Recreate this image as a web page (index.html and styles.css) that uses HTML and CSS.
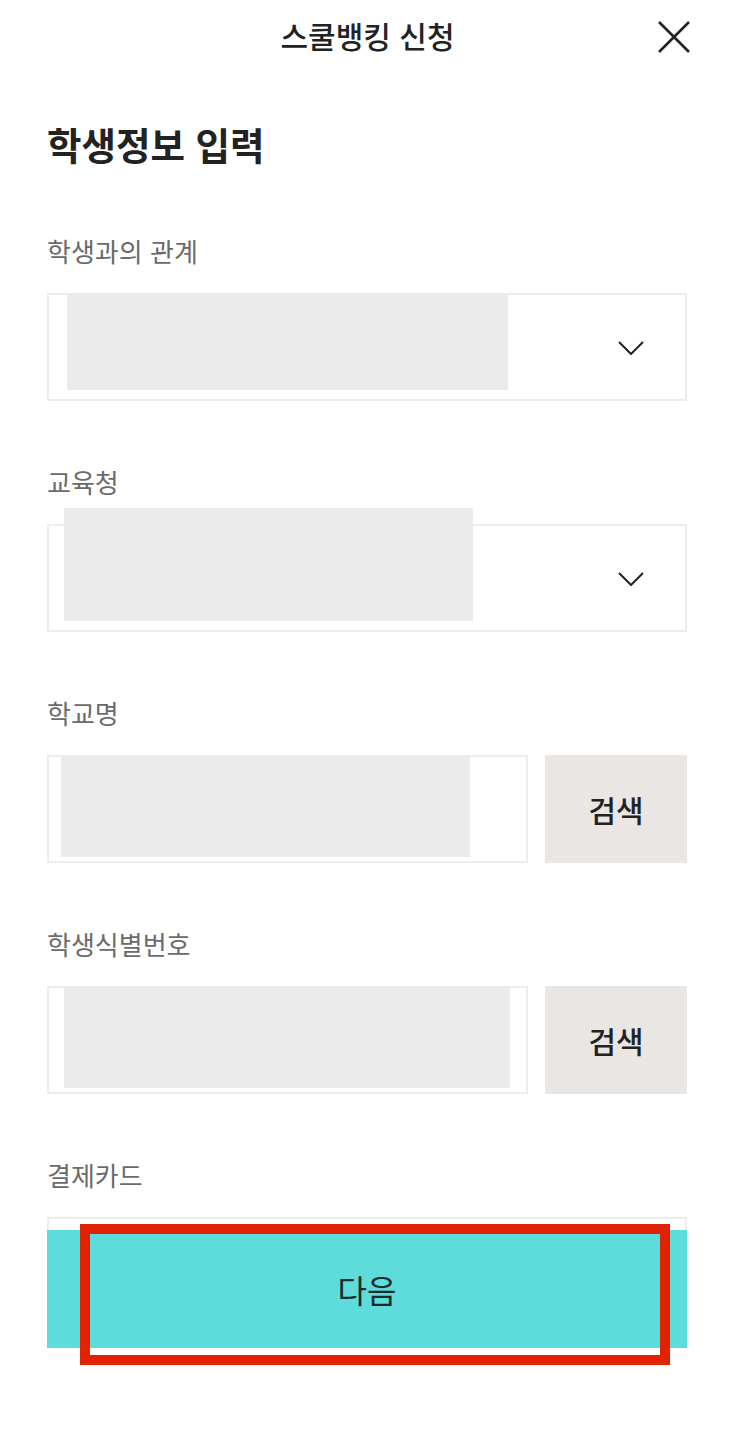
FILE: index.html
```html
<!DOCTYPE html>
<html lang="ko">
<head>
<meta charset="utf-8">
<link rel="stylesheet" href="styles.css">
</head>
<body>
<div class="page">
  <header class="header">
    <h1 class="title">스쿨뱅킹 신청</h1>
    <button class="close" aria-label="닫기">
      <svg width="34" height="34" viewBox="0 0 34 34"><path d="M2 2 L32 32 M32 2 L2 32" stroke="#222" stroke-width="2.6" fill="none"/></svg>
    </button>
  </header>

  <main class="content">
    <h2 class="heading">학생정보 입력</h2>

    <section class="field">
      <label class="label">학생과의 관계</label>
      <div class="box select">
        <div class="mask mask1"></div>
        <svg class="chev" width="26" height="14" viewBox="0 0 26 14"><path d="M1 1 L13 13 L25 1" stroke="#222" stroke-width="2" fill="none"/></svg>
      </div>
    </section>

    <section class="field">
      <label class="label">교육청</label>
      <div class="box select">
        <div class="mask mask2"></div>
        <svg class="chev" width="26" height="14" viewBox="0 0 26 14"><path d="M1 1 L13 13 L25 1" stroke="#222" stroke-width="2" fill="none"/></svg>
      </div>
    </section>

    <section class="field">
      <label class="label">학교명</label>
      <div class="row">
        <div class="box input"><div class="mask mask3"></div></div>
        <button class="search">검색</button>
      </div>
    </section>

    <section class="field">
      <label class="label">학생식별번호</label>
      <div class="row">
        <div class="box input"><div class="mask mask4"></div></div>
        <button class="search">검색</button>
      </div>
    </section>

    <section class="field">
      <label class="label">결제카드</label>
      <div class="box select"></div>
    </section>
  </main>

  <div class="bottom">
    <button class="next">다음</button>
  </div>
  <div class="highlight"></div>
</div>
</body>
</html>
```

FILE: styles.css
```css
* { box-sizing: border-box; }
html, body { margin: 0; padding: 0; background: #fff; }
body {
  font-family: "Noto Sans CJK KR", "Noto Sans", sans-serif;
  color: #222;
  width: 735px;
  height: 1440px;
  overflow: hidden;
}
.page { position: relative; width: 735px; height: 1440px; }

.header {
  position: relative;
  height: 70px;
  display: flex;
  align-items: center;
  justify-content: center;
}
.title {
  margin: 0;
  font-size: 30px;
  font-weight: 500;
  line-height: 36px;
  color: #222;
}
.close {
  position: absolute;
  right: 44px;
  top: 20px;
  width: 34px;
  height: 34px;
  padding: 0;
  border: 0;
  background: none;
}
.close svg { display: block; }

.content { padding: 51px 48px 0 47px; }
.heading {
  margin: 0;
  font-size: 37.5px;
  font-weight: 700;
  line-height: 46px;
  color: #222;
}
.heading + .field { margin-top: 69px; }
.field + .field { margin-top: 66px; }
.label {
  display: block;
  font-size: 26px;
  line-height: 30px;
  color: #6b6b6b;
  margin-bottom: 27px;
}
.box {
  position: relative;
  height: 108px;
  border: 2px solid #ededed;
  background: #fff;
}
.select { width: 640px; }
.chev { position: absolute; right: 41px; top: 46px; }
.mask { position: absolute; background: #ebebeb; }
.mask1 { left: 18px; top: -2px; width: 441px; height: 97px; }
.mask2 { left: 15px; top: -18px; width: 409px; height: 113px; }
.mask3 { left: 12px; top: -2px; width: 409px; height: 102px; }
.mask4 { left: 15px; top: -2px; width: 446px; height: 102px; }

.row { display: flex; gap: 17px; }
.input { width: 481px; }
.search {
  width: 142px;
  height: 108px;
  border: 0;
  background: #e9e6e4;
  font-family: inherit;
  font-size: 30px;
  font-weight: 500;
  color: #222;
  padding: 0;
}

.bottom {
  position: absolute;
  left: 47px;
  top: 1230px;
  width: 640px;
  height: 118px;
}
.next {
  width: 100%;
  height: 100%;
  border: 0;
  background: #5edbdb;
  font-family: inherit;
  font-size: 32px;
  font-weight: 400;
  color: #1d2b2b;
  padding: 0;
}
.highlight {
  position: absolute;
  left: 80px;
  top: 1224px;
  width: 590px;
  height: 141px;
  border: 10px solid #e02200;
}
```
